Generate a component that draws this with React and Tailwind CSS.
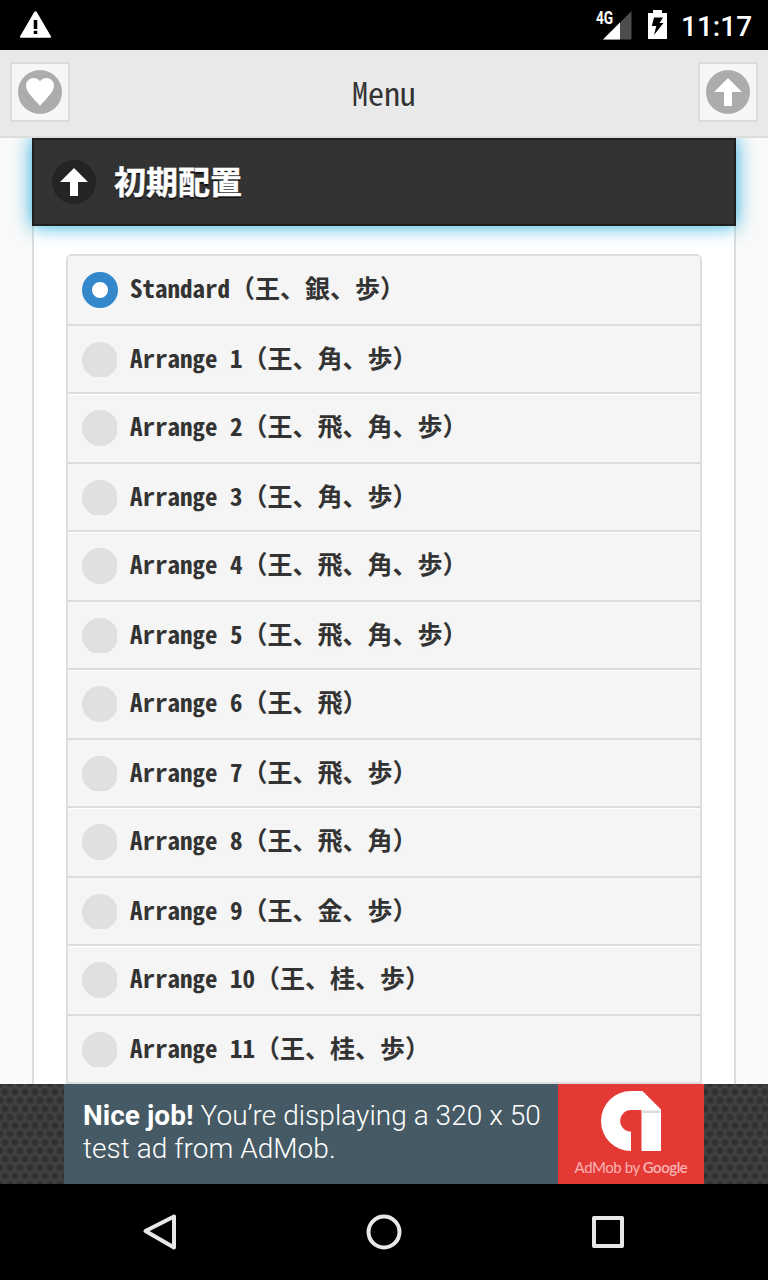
import React from "react";

const OPTIONS = [
  "Standard（王、銀、歩）",
  "Arrange 1（王、角、歩）",
  "Arrange 2（王、飛、角、歩）",
  "Arrange 3（王、角、歩）",
  "Arrange 4（王、飛、角、歩）",
  "Arrange 5（王、飛、角、歩）",
  "Arrange 6（王、飛）",
  "Arrange 7（王、飛、歩）",
  "Arrange 8（王、飛、角）",
  "Arrange 9（王、金、歩）",
  "Arrange 10（王、桂、歩）",
  "Arrange 11（王、桂、歩）",
];

function ArrowUp() {
  return (
    <svg className="size-7" viewBox="0 0 14 14" fill="#fff" shapeRendering="geometricPrecision">
      <polygon points="7,0 0,7 5,7 5,14 9,14 9,7 14,7" />
    </svg>
  );
}

function Heart() {
  return (
    <svg className="size-7" viewBox="0 0 28 28" fill="#fff">
      <path d="M14 3.2C12.200 1 10 0.100 7.800 0.100C3.400 0.100 0 3.400 0 7.600C0 14 7 20 14 27.800C21 20 28 14 28 7.600C28 3.400 24.600 0.100 20.200 0.100C18 0.100 15.800 1 14 3.200Z" />
    </svg>
  );
}

function StatusBar() {
  return (
    <header className="flex h-[50px] shrink-0 items-start justify-between bg-black">
      <svg className="mt-[8px] ml-[19px] size-[33px]" viewBox="0 0 24 24" fill="#fff">
        <path d="M1.600 21.700h20.800c.8 0 1.100-.7.700-1.300L12.800 2.800c-.4-.7-1.200-.7-1.600 0L.9 20.400c-.4.6-.1 1.300.7 1.300zM13.300 18.900h-2.600v-2.400h2.600v2.400zm0-3.700h-2.600V8.800h2.600v6.400z" />
      </svg>
      <div className="flex items-start">
        <span className="mt-[7px] w-[7px] origin-left scale-x-[0.78] font-[Roboto,sans-serif] text-[17.5px] leading-[22px] font-bold text-white">4G</span>
        <svg className="mt-[10px] h-[30px] w-[29px]" viewBox="0 0 29 30">
          <path d="M0 29.500L28.500 1V29.500Z" fill="#4d4d4d" />
          <path d="M0 29.500L17 12.500V29.500Z" fill="#fff" />
        </svg>
        <svg className="mt-[10px] ml-4 h-[29px] w-[19px]" viewBox="0 0 19 29">
          <path d="M5 0H14V3H19V29H0V3H5Z" fill="#fff" />
          <path d="M6 7.500H15L11.500 13H15.500L6 25L8.300 16H3.800Z" fill="#000" />
        </svg>
        <span className="mt-[9px] mr-[15px] ml-[14px] w-[72px] font-[Roboto,sans-serif] text-[28px] leading-9 font-medium whitespace-nowrap text-white">11:17</span>
      </div>
    </header>
  );
}

function Toolbar() {
  return (
    <div className="flex h-[88px] shrink-0 items-start justify-between border-b-2 border-[#ddd] bg-[#e9e9e9] px-2.5 pt-3">
      <button className="flex size-[60px] items-center justify-center border-2 border-[#ddd] bg-[#f6f6f6]">
        <span className="flex size-11 items-center justify-center rounded-full bg-[#acacac]"><Heart /></span>
      </button>
      <h1 className="pt-[9px] font-['Noto_Sans_Mono_CJK_JP','Noto_Sans_CJK_JP',monospace] text-[32px] leading-[42px] text-[#333] [text-shadow:0_2px_0_#eee]">Menu</h1>
      <button className="flex size-[60px] items-center justify-center border-2 border-[#ddd] bg-[#f6f6f6]">
        <span className="flex size-11 items-center justify-center rounded-full bg-[#acacac]"><ArrowUp /></span>
      </button>
    </div>
  );
}

function Option({ label, checked }) {
  return (
    <label className="group flex h-[70px] items-start border-t-2 border-[#ddd] bg-[#f5f5f5] pt-4 pl-3.5 not-first:odd:shadow-[inset_0_1px_0_#fff] even:h-[68px]">
      {checked ? (
        <span className="size-9 shrink-0 rounded-full border-[10px] border-[#38c] bg-white" />
      ) : (
        <span className="mr-px h-9 w-[35px] shrink-0 overflow-hidden group-even:h-[35px]">
          <span className="block size-9 rounded-full bg-[#e0e0e0]" />
        </span>
      )}
      <span className="-mt-[2px] ml-3 font-['Noto_Sans_Mono_CJK_JP','Noto_Sans_CJK_JP',monospace] text-[25px] leading-[34px] font-bold whitespace-nowrap text-[#333] [text-shadow:0_2px_0_#f3f3f3]">{label}</span>
    </label>
  );
}

function Panel() {
  return (
    <main className="flex h-[946px] shrink-0 flex-col overflow-hidden bg-[#f9f9f9] px-8">
      <div className="z-10 flex h-[88px] shrink-0 items-center border-2 border-[#1f1f1f] bg-[#333] pl-[18px] shadow-[0_0_18px_#22aadd]">
        <span className="flex size-11 items-center justify-center rounded-full bg-[#242424]"><ArrowUp /></span>
        <h2 className="-mt-[5px] ml-[18px] font-['Noto_Sans_CJK_JP',sans-serif] text-[32px] leading-10 font-bold text-white [-webkit-text-stroke:0.4px_#fff] [text-shadow:0_2px_0_#111]">初期配置</h2>
      </div>
      <div className="h-[858px] shrink-0 border-x-2 border-[#ddd] bg-white px-8 pt-7">
        <div className="h-[830px] overflow-hidden rounded-t-md border-x-2 border-b-2 border-[#ddd]">
          {OPTIONS.map((label, i) => (
            <Option key={label} label={label} checked={i === 0} />
          ))}
        </div>
      </div>
    </main>
  );
}

function AdBanner() {
  return (
    <div className="flex h-[100px] shrink-0 justify-center bg-[#434343] bg-[radial-gradient(circle_at_5px_8px,#303030_2px,transparent_5px),radial-gradient(circle_at_0px_16.4px,#303030_2px,transparent_5px),radial-gradient(circle_at_10px_16.4px,#303030_2px,transparent_5px),radial-gradient(circle_at_0px_-0.4px,#303030_2px,transparent_5px),radial-gradient(circle_at_10px_-0.4px,#303030_2px,transparent_5px)] bg-[length:10px_16.8px]">
      <div className="flex w-[640px]">
        <p className="w-[494px] bg-[#455a64] pt-[15px] pl-[19px] font-[Roboto,sans-serif] text-[28px] leading-[33px] font-light tracking-[0.04px] whitespace-nowrap text-white">
          <b className="font-bold">Nice job!</b> You’re displaying a 320 x 50
          <br />
          test ad from AdMob.
        </p>
        <div className="flex w-[146px] flex-col items-center bg-[#e53935] pt-[7px]">
          <svg className="h-[60px] w-[60px]" viewBox="0 0 60 60" fill="#fff">
            <path d="M30 0H41.500L60 18.500V60H40.500V19H30A10.800 10.800 0 0 0 30 40.600V60A30 30 0 0 1 30 0Z" />
            <path d="M40.500 19.500H59.500V22H40.500Z" fill="#ddd" />
          </svg>
          <p className="mt-[6px] font-[Lato,sans-serif] text-[15px] leading-5 tracking-[-0.45px] whitespace-nowrap text-[#f8b4b2]">
            AdMob by <span className="font-semibold">Google</span>
          </p>
        </div>
      </div>
    </div>
  );
}

function NavBar() {
  return (
    <nav className="flex h-24 shrink-0 items-center justify-between bg-black px-[140px]">
      <svg className="size-10" viewBox="0 0 40 40" fill="none" stroke="#e8e8e8" strokeWidth="4" strokeLinejoin="round">
        <path d="M34 3.500V34.500L5.500 18Z" transform="translate(0 1)" />
      </svg>
      <svg className="size-10" viewBox="0 0 40 40" fill="none" stroke="#e8e8e8" strokeWidth="4">
        <circle cx="20" cy="20" r="15.500" />
      </svg>
      <svg className="size-10" viewBox="0 0 40 40" fill="none" stroke="#e8e8e8" strokeWidth="4" strokeLinejoin="round">
        <rect x="6" y="6" width="28" height="28" />
      </svg>
    </nav>
  );
}

export default function App() {
  return (
    <div className="flex h-[1280px] w-[768px] flex-col overflow-hidden bg-[#f9f9f9]">
      <StatusBar />
      <Toolbar />
      <Panel />
      <AdBanner />
      <NavBar />
    </div>
  );
}
